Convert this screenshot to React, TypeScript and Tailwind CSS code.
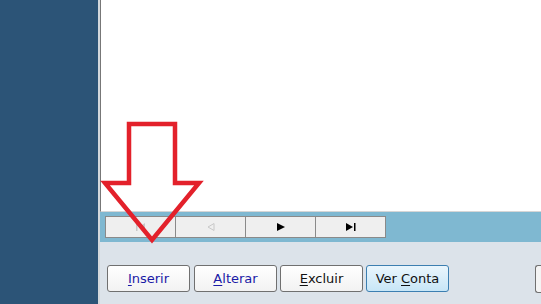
import React from 'react';

const font = { fontFamily: '"DejaVu Sans", Verdana, sans-serif' };

function NavButton({ children, faded }: { children: React.ReactNode; faded?: boolean }) {
  return (
    <div
      className={`flex h-[22px] w-[71px] items-center justify-center border border-[#8a8a8a] bg-[#efefef] -ml-px first:ml-0 ${
        faded ? 'text-[#c8c8c8]' : 'text-black'
      }`}
    >
      {children}
    </div>
  );
}

function ActionButton({
  label,
  hot,
  blue,
  primary,
  extra = '',
}: {
  label: string;
  hot: number;
  blue?: boolean;
  primary?: boolean;
  extra?: string;
}) {
  const before = label.slice(0, hot);
  const key = label[hot];
  const after = label.slice(hot + 1);
  return (
    <button
      className={`flex h-[27px] w-[83px] items-center justify-center rounded-[3px] border text-[13px] ${extra} ${
        primary
          ? 'border-[#3c7fb1] bg-gradient-to-b from-[#eaf6fd] to-[#c7e6f7]'
          : 'border-[#707070] bg-gradient-to-b from-[#ffffff] to-[#f2f2f2]'
      } ${blue ? 'text-[#1a1aa6]' : 'text-[#111]'}`}
      style={font}
    >
      <span className="whitespace-pre">
        {before}
        <span className="underline underline-offset-2">{key}</span>
        {after}
      </span>
    </button>
  );
}

export default function App() {
  return (
    <div className="relative flex h-[304px] w-[541px] overflow-hidden bg-[#dce3ea]" style={font}>
      <aside className="h-full w-[98px] shrink-0 bg-[#2c5477]" />

      <main className="flex flex-1 flex-col border-l-2 border-[#d4d8dc]">
        <section className="h-[212px] border-b border-l border-b-[#d6d6d6] border-l-[#777] bg-white" />

        <div className="flex h-[30px] items-center bg-[#7fb8d1] pl-[5px]">
          <NavButton faded>
            <svg width="9" height="8" viewBox="0 0 9 8">
              <rect x="0" y="0" width="1.5" height="8" fill="currentColor" />
              <path d="M9 0 L3 4 L9 8 Z" fill="currentColor" />
            </svg>
          </NavButton>
          <NavButton faded>
            <svg width="8" height="8" viewBox="0 0 8 8">
              <path d="M7 0.5 L1 4 L7 7.5 Z" fill="none" stroke="currentColor" strokeWidth="1" />
            </svg>
          </NavButton>
          <NavButton>
            <svg width="8" height="8" viewBox="0 0 8 8">
              <path d="M0 0 L8 4 L0 8 Z" fill="currentColor" />
            </svg>
          </NavButton>
          <NavButton>
            <svg width="10" height="8" viewBox="0 0 10 8">
              <path d="M0 0 L7 4 L0 8 Z" fill="currentColor" />
              <rect x="8" y="0" width="1.5" height="8" fill="currentColor" />
            </svg>
          </NavButton>
        </div>

        <div className="flex flex-1 items-start gap-[3px] pl-[7px] pt-[23px]">
          <ActionButton label="Inserir" hot={0} blue />
          <ActionButton label="Alterar" hot={0} blue extra="ml-px" />
          <ActionButton label="Excluir" hot={0} />
          <ActionButton label="Ver Conta" hot={4} primary />
          <div className="ml-auto h-[28px] w-[6px] rounded-l-[3px] border border-r-0 border-[#707070] bg-[#f4f4f4]" />
        </div>
      </main>

      <svg className="pointer-events-none absolute left-0 top-0" width="541" height="304">
        <polygon
          points="129,124 175,124 175,183 199,183 152,240 105,183 129,183"
          fill="none"
          stroke="#e3212b"
          strokeWidth="4.5"
          strokeLinejoin="miter"
          strokeMiterlimit="10"
        />
      </svg>
    </div>
  );
}
